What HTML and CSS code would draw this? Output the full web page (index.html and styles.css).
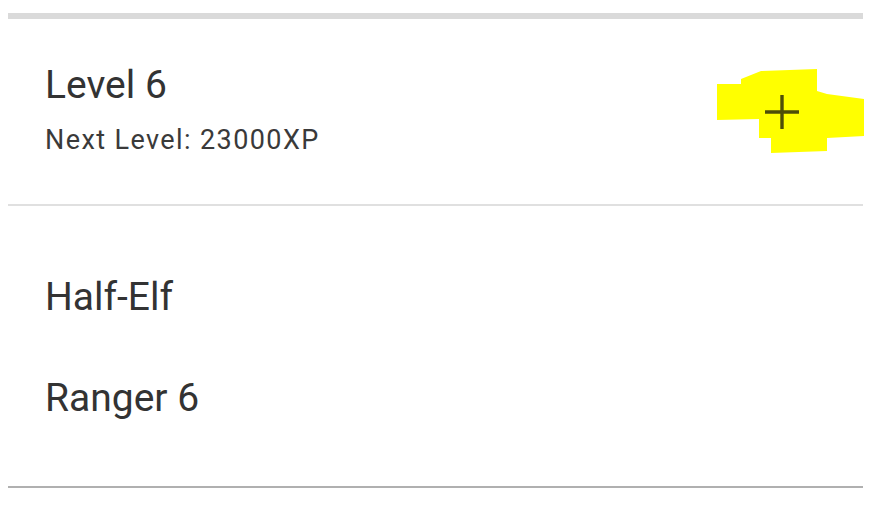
FILE: index.html
```html
<!DOCTYPE html>
<html lang="en">
<head>
<meta charset="utf-8">
<title>Character</title>
<link rel="stylesheet" href="styles.css">
</head>
<body>
<div class="sheet">
  <div class="topbar"></div>
  <div class="item level">
    <div class="texts">
      <div class="primary">Level 6</div>
      <div class="secondary">Next Level: 23000XP</div>
    </div>
    <div class="action">
      <svg class="highlight" width="152" height="90" viewBox="0 0 152 90" aria-hidden="true">
        <polygon fill="#ffff00" points="4,15 28,15 28,10 48,2 104,0 104,22 114,25 151,30 151,67 114,69 114,82 58,84 58,69 46,69 46,50 4,51"/>
      </svg>
      <svg class="plus" width="38" height="38" viewBox="0 0 38 38" aria-hidden="true">
        <path d="M19 2 V36 M2 19 H36" stroke="#4e4e08" stroke-width="3.4" fill="none"/>
      </svg>
    </div>
  </div>
  <div class="divider"></div>
  <div class="item info">
    <div class="primary">Half-Elf</div>
    <div class="primary">Ranger 6</div>
  </div>
  <div class="divider dark"></div>
</div>
</body>
</html>
```
FILE: styles.css
```css
html, body {
  margin: 0;
  padding: 0;
  background: #ffffff;
}
body {
  font-family: Roboto, "Liberation Sans", sans-serif;
  color: #333333;
}
.sheet {
  padding: 13px 17px 0 8px;
}
.topbar {
  height: 6px;
  background: #dadada;
}
.item {
  padding-left: 37px;
}
.level {
  display: flex;
  align-items: center;
  justify-content: space-between;
  padding-top: 42px;
  padding-bottom: 48px;
  padding-right: 62px;
}
.texts {
  display: flex;
  flex-direction: column;
  gap: 15px;
}
.primary {
  font-size: 39px;
  line-height: 48px;
  color: #333333;
}
.secondary {
  font-size: 27px;
  line-height: 32px;
  letter-spacing: 1.4px;
  color: #3a3a3a;
}
.action {
  position: relative;
  width: 38px;
  height: 38px;
  margin-top: 6px;
}
.highlight {
  position: absolute;
  left: -50px;
  top: -24px;
}
.plus {
  position: relative;
  display: block;
}
.divider {
  height: 2px;
  background: #e0e0e0;
}
.divider.dark {
  background: #b0b0b0;
}
.info {
  display: flex;
  flex-direction: column;
  gap: 53px;
  padding-top: 67px;
  padding-bottom: 64px;
}
```
